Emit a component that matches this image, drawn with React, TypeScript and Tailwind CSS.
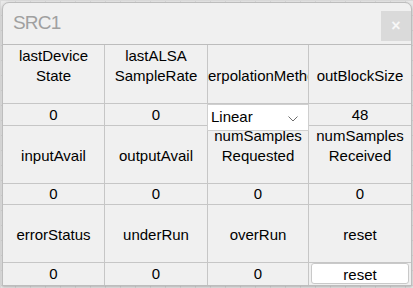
import React from "react";

const F = { fontFamily: '"Liberation Sans", Arial, sans-serif' };

function Head({ lines, clip }: { lines: string[]; clip?: boolean }) {
  return (
    <div className="relative flex h-full flex-col items-center justify-end overflow-hidden pb-[17px] text-[15px] leading-[20px] text-black">
      {lines.map((l) => (
        <div key={l} className={clip ? "whitespace-nowrap" : "whitespace-nowrap text-center"}>
          {l}
        </div>
      ))}
    </div>
  );
}

function Val({ v }: { v: string }) {
  return (
    <div className="flex h-full items-center justify-center text-[15px] leading-[20px] text-black">{v}</div>
  );
}

export default function App() {
  const cell = "border-r border-b border-[#c6c6c6] min-w-0";
  const cellLast = "border-b border-[#c6c6c6] min-w-0";
  const bot = "border-r border-[#c6c6c6] min-w-0";
  return (
    <div
      style={F}
      className="h-[288px] w-[413px] overflow-hidden bg-[#e9e9e9] bg-[linear-gradient(#dadada_1px,transparent_1px),linear-gradient(90deg,#dadada_1px,transparent_1px)] bg-[size:15px_15px] pt-[2px] pl-[2px]"
    >
      <div className="flex h-[284px] w-[410px] flex-col overflow-hidden rounded-t-[7px] border border-[#bdbdbd] bg-[#f0f0f0] shadow-[0_1px_3px_rgba(0,0,0,0.25)]">
        <div className="flex h-[42px] shrink-0 items-start justify-between border-b border-[#bcbcbc]">
          <div className="pt-[9px] pl-[10px] text-[19px] leading-[22px] tracking-[-0.8px] text-[#a0a0a0]">SRC1</div>
          <div className="mt-[8px] flex h-[30px] w-[30px] items-center justify-center bg-[#dadada] text-[16px] font-bold leading-none text-[#f7f7f7]">
            ×
          </div>
        </div>
        <div className="grid grid-cols-[102px_103px_101px_102px] grid-rows-[59px_22px_58px_21px_58px_22px]">
          <div className={cell}><Head lines={["lastDevice", "State"]} /></div>
          <div className={cell}><Head lines={["lastALSA", "SampleRate"]} /></div>
          <div className={cell}><Head lines={["interpolationMethod"]} clip /></div>
          <div className={cellLast}><Head lines={["outBlockSize"]} /></div>

          <div className={cell}><Val v="0" /></div>
          <div className={cell}><Val v="0" /></div>
          <div className={cell + " relative overflow-visible"}>
            <div className="absolute top-0 -left-[1px] z-10 flex h-[27px] w-[102px] items-start justify-between border border-[#cfcfcf] bg-white pt-[2px] pl-[3px] pr-[10px] text-[15px] leading-[20px] text-black">
              <span>Linear</span>
              <svg width="10" height="6" viewBox="0 0 10 6" className="mt-[9px]">
                <polyline points="0.5,0.5 5,5 9.5,0.5" fill="none" stroke="#6d6d6d" strokeWidth="1" />
              </svg>
            </div>
          </div>
          <div className={cellLast}><Val v="48" /></div>

          <div className={cell}><Head lines={["inputAvail"]} /></div>
          <div className={cell}><Head lines={["outputAvail"]} /></div>
          <div className={cell}><Head lines={["numSamples", "Requested"]} /></div>
          <div className={cellLast}><Head lines={["numSamples", "Received"]} /></div>

          <div className={cell}><Val v="0" /></div>
          <div className={cell}><Val v="0" /></div>
          <div className={cell}><Val v="0" /></div>
          <div className={cellLast}><Val v="0" /></div>

          <div className={cell}><Head lines={["errorStatus"]} /></div>
          <div className={cell}><Head lines={["underRun"]} /></div>
          <div className={cell}><Head lines={["overRun"]} /></div>
          <div className={cellLast}><Head lines={["reset"]} /></div>

          <div className={bot}><Val v="0" /></div>
          <div className={bot}><Val v="0" /></div>
          <div className={bot}><Val v="0" /></div>
          <div className="min-w-0 pl-[2px] pr-[2px]">
            <div className="flex h-[21px] w-[98px] items-start justify-center rounded-[3px] border border-[#c9c9c9] bg-white pt-[1px] text-[15px] leading-[20px] text-black">
              reset
            </div>
          </div>
        </div>
      </div>
    </div>
  );
}
